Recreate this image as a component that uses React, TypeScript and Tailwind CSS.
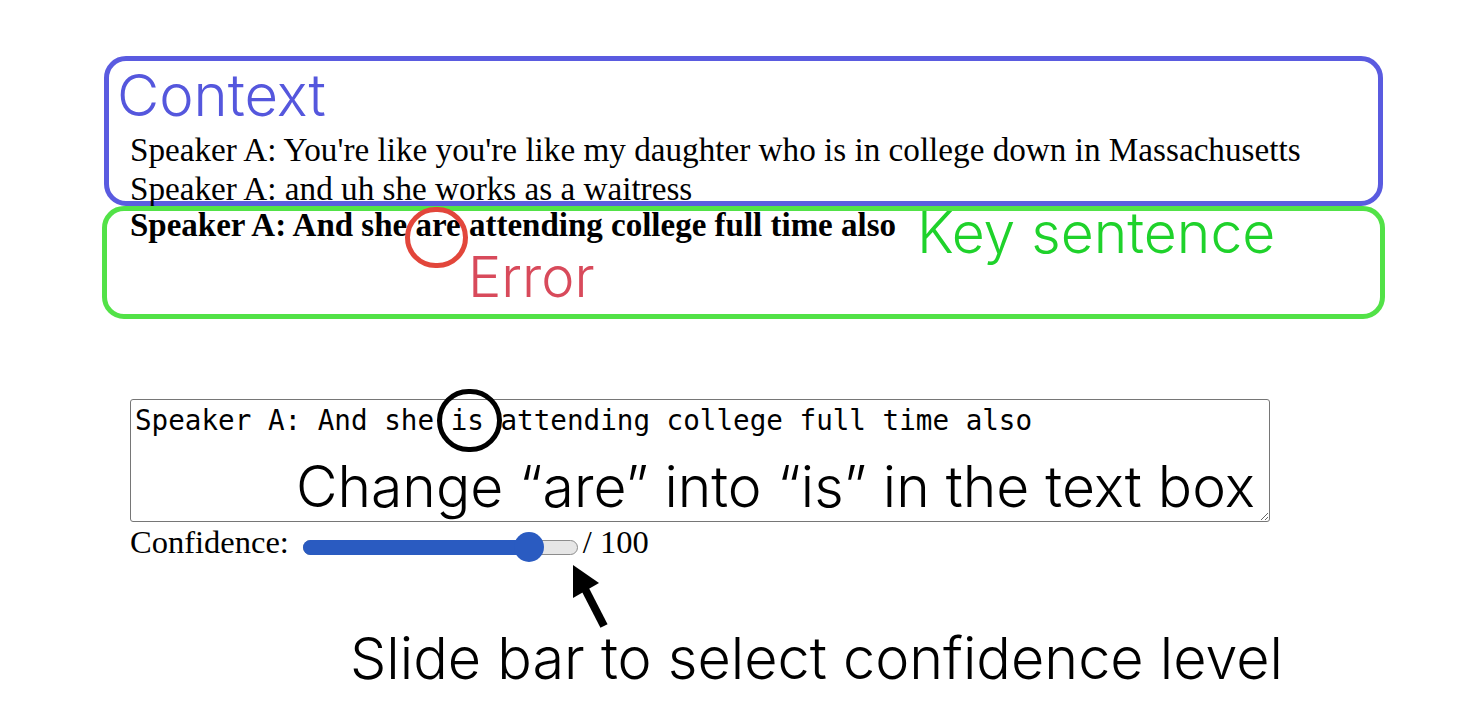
import React from "react";

// Annotated screenshot of the correction task: context, key sentence, edit box and confidence slider
const contextLines: string[] = [
  "Speaker A: You're like you're like my daughter who is in college down in Massachusetts",
  "Speaker A: and uh she works as a waitress",
];

const keySentence = "Speaker A: And she are attending college full time also";
const corrected = "Speaker A: And she is attending college full time also";

const Slider = ({ value }: { value: number }) => {
  // thumb center runs from 15px to (width - 15px)
  const left = 15 + (245 * value) / 100;
  return (
    <div className="relative w-[275px] h-[15px]">
      <div className="absolute inset-0 rounded-full bg-[#e6e6e6] border border-[#8c8c8c]" />
      <div className="absolute top-0 left-0 h-[15px] rounded-full bg-[#2a5bc1]" style={{ width: left + 4 }} />
      <div
        className="absolute top-[-8px] w-[30px] h-[30px] rounded-full bg-[#2a5bc1]"
        style={{ left: left - 15 }}
      />
    </div>
  );
};

export default function App() {
  return (
    <div className="relative w-[1476px] h-[726px] overflow-hidden bg-white text-black font-['Liberation_Serif',serif]">
      <div className="flex flex-col items-start pl-[102px] pt-[56px]">
        {/* Context box */}
        <div className="ml-[2px] w-[1279px] h-[150px] shrink-0 border-[5px] border-[#5a5be0] rounded-[22px]">
          <div className="ml-[8px] mt-[5px] text-[58px] leading-none font-light text-[#5557dd] font-['Inter',sans-serif]">
            Context
          </div>
          <div className="pl-[21px] mt-[6px]">
            {contextLines.map((line, i) => (
              <p key={i} className="text-[33.2px] leading-[39px] whitespace-nowrap">
                {line}
              </p>
            ))}
          </div>
        </div>

        {/* Key sentence box */}
        <div className="w-[1283px] h-[113px] shrink-0 border-[5px] border-[#52e247] rounded-[22px]">
          <div className="flex items-start gap-[21px] pl-[23px]">
            <p className="text-[33px] leading-[29px] font-bold whitespace-nowrap">{keySentence}</p>
            <span className="text-[57px] leading-[43px] font-light text-[#1fd22b] font-['Inter',sans-serif] whitespace-nowrap">
              Key sentence
            </span>
          </div>
        </div>

        <textarea
          readOnly
          defaultValue={corrected}
          className="ml-[28px] mt-[80px] block w-[1140px] h-[123px] border border-[#767676] rounded-[3px] px-[4px] pt-[5px] text-[27.6px] leading-[32px] font-['DejaVu_Sans_Mono',monospace] outline-none resize"
        />

        <div className="ml-[28px] flex items-start h-[40px]">
          <span className="mt-[2px] text-[32.5px] leading-[36px]">Confidence:</span>
          <div className="ml-[14px] mt-[18px]">
            <Slider value={86} />
          </div>
          <span className="ml-[5px] mt-[2px] text-[32.5px] leading-[36px]">/ 100</span>
        </div>

        <p className="ml-[248px] mt-[68px] text-[57.5px] leading-none font-light font-['Inter',sans-serif] whitespace-nowrap">
          Slide bar to select confidence level
        </p>
      </div>

      {/* annotation marks drawn over the screenshot */}
      <span className="absolute left-[468px] top-[249px] text-[56px] leading-none font-light text-[#d84a5b] font-['Inter',sans-serif]">
        Error
      </span>
      <div className="absolute left-[405px] top-[207px] w-[63px] h-[61px] rounded-full border-[5px] border-[#e2463b]" />
      <div className="absolute left-[437px] top-[389px] w-[65px] h-[63px] rounded-full border-[5px] border-black" />

      <span className="absolute left-[296px] top-[458px] text-[57px] leading-none font-light font-['Inter',sans-serif] whitespace-nowrap">
        Change “are” into “is” in the text box
      </span>

      <svg className="absolute left-[560px] top-[555px]" width="60" height="80" viewBox="0 0 60 80">
        <polygon points="13,10 13,43 39,28" fill="black" />
        <line x1="25" y1="34" x2="44" y2="71" stroke="black" strokeWidth="8" />
      </svg>
    </div>
  );
}
